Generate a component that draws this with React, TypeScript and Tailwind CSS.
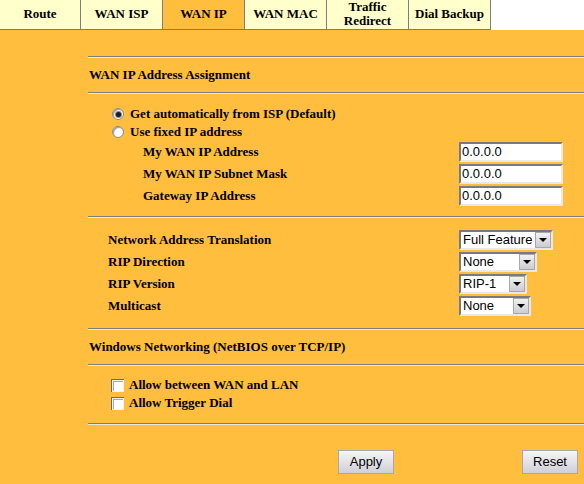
import React from 'react';

const serif = "font-['Liberation_Serif','Times_New_Roman',serif]";
const sans = "font-['Liberation_Sans',Arial,sans-serif]";

function Rule() {
  return <div className="h-[2px] border-t border-t-[#7c7c84] border-b border-b-[#e8e8e8]" />;
}

function Radio({ checked }: { checked?: boolean }) {
  return (
    <div className="shrink-0 flex items-center justify-center w-[12px] h-[12px] rounded-full border border-[#8a8a8a] bg-white shadow-[inset_1px_1px_1px_#9a9a9a]">
      {checked && <div className="w-[5px] h-[5px] rounded-full bg-[#1a1a1a] ring-1 ring-[#888]" />}
    </div>
  );
}

function Checkbox() {
  return (
    <div className="shrink-0 w-[13px] h-[13px] p-[1px] bg-[#f2f2f2] border-t border-l border-[#6a6a6a]">
      <div className="w-full h-full bg-[#ffffff] border-t border-l border-[#a8a8a8]" />
    </div>
  );
}

function TextBox({ value }: { value: string }) {
  return (
    <div className={`w-[104px] h-[20px] border-2 border-t-[#7a7a7a] border-l-[#7a7a7a] border-b-[#e8e8e8] border-r-[#e8e8e8] bg-white pl-[1px] text-[13px] leading-[16px] font-normal text-black whitespace-nowrap ${sans}`}>
      {value}
    </div>
  );
}

function Select({ value, width }: { value: string; width: string }) {
  return (
    <div className={`${width} h-[20px] flex border-2 border-t-[#7a7a7a] border-l-[#7a7a7a] border-b-[#e8e8e8] border-r-[#e8e8e8] bg-white`}>
      <span className={`flex-1 pl-[2px] text-[13px] leading-[16px] font-normal text-black whitespace-nowrap overflow-hidden ${sans}`}>{value}</span>
      <span className="w-[16px] h-[16px] shrink-0 bg-[#e0e0e0] bg-linear-to-b from-[#f2f2f2] to-[#cbcbd2] border border-[#a8a8a8] flex items-center justify-center">
        <span className="w-0 h-0 border-l-[4px] border-r-[4px] border-t-[4px] border-l-transparent border-r-transparent border-t-black" />
      </span>
    </div>
  );
}

function Button({ label }: { label: string }) {
  return (
    <div className={`w-[56px] h-[24px] flex items-center justify-center border border-[#a8a8b0] bg-[#e0e0e4] bg-linear-to-b from-[#f6f6f6] to-[#cfcfd8] text-[13px] font-normal text-black ${sans}`}>
      {label}
    </div>
  );
}

export default function App() {
  const tabs = [
    { label: 'Route', w: 'w-[81px]' },
    { label: 'WAN ISP', w: 'w-[82px]' },
    { label: 'WAN IP', w: 'w-[82px]', active: true },
    { label: 'WAN MAC', w: 'w-[82px]' },
    { label: 'Traffic\nRedirect', w: 'w-[82px]' },
    { label: 'Dial Backup', w: 'w-[82px]' },
  ];

  return (
    <div className={`w-[584px] h-[484px] bg-white overflow-hidden ${serif} text-[13px] font-bold text-black`}>
      {/* Tabs */}
      <div className="flex h-[30px]">
        {tabs.map((t) => (
          <div
            key={t.label}
            className={`${t.w} h-[30px] pb-[1px] flex items-center justify-center text-center leading-[14px] whitespace-pre-line border-r border-b border-[#7c7c84] ${t.active ? 'bg-[#ffbe3e]' : 'bg-[#ffffcc]'}`}
          >
            {t.label}
          </div>
        ))}
      </div>

      {/* Body */}
      <div className="bg-[#ffbe3e] h-[454px] pl-[88px] pt-[26px]">
        <Rule />
        <div className="h-[34px] flex items-center pl-[1px]">WAN IP Address Assignment</div>
        <Rule />

        <div className="pt-[11px] pb-[9px]">
          <div className="h-[18px] flex items-center gap-[6px] pl-[24px]">
            <Radio checked />
            <span>Get automatically from ISP (Default)</span>
          </div>
          <div className="h-[18px] flex items-center gap-[6px] pl-[24px]">
            <Radio />
            <span>Use fixed IP address</span>
          </div>
          {['My WAN IP Address', 'My WAN IP Subnet Mask', 'Gateway IP Address'].map((l) => (
            <div key={l} className="h-[22px] flex items-center">
              <span className="w-[371px] pl-[55px]">{l}</span>
              <TextBox value="0.0.0.0" />
            </div>
          ))}
        </div>
        <Rule />

        <div className="pt-[11px] pb-[11px]">
          {[
            { l: 'Network Address Translation', v: 'Full Feature', w: 'w-[94px]' },
            { l: 'RIP Direction', v: 'None', w: 'w-[78px]' },
            { l: 'RIP Version', v: 'RIP-1', w: 'w-[68px]' },
            { l: 'Multicast', v: 'None', w: 'w-[72px]' },
          ].map((r) => (
            <div key={r.l} className="h-[22px] flex items-center">
              <span className="w-[371px] pl-[20px]">{r.l}</span>
              <Select value={r.v} width={r.w} />
            </div>
          ))}
        </div>
        <Rule />
        <div className="h-[34px] flex items-center pl-[1px]">Windows Networking (NetBIOS over TCP/IP)</div>
        <Rule />

        <div className="pt-[10px] pb-[11px]">
          {['Allow between WAN and LAN', 'Allow Trigger Dial'].map((l) => (
            <div key={l} className="h-[18px] flex items-center gap-[5px] pl-[23px]">
              <Checkbox />
              <span>{l}</span>
            </div>
          ))}
        </div>
        <Rule />

        <div className="flex mt-[25px]">
          <div className="ml-[250px]">
            <Button label="Apply" />
          </div>
          <div className="ml-[128px]">
            <Button label="Reset" />
          </div>
        </div>
      </div>
    </div>
  );
}
